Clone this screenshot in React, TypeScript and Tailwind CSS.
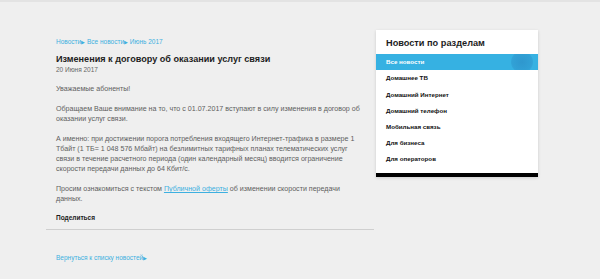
import React from "react";

const items = [
  "Все новости",
  "Домашнее ТВ",
  "Домашний Интернет",
  "Домашний телефон",
  "Мобильная связь",
  "Для бизнеса",
  "Для операторов",
];

export default function App() {
  return (
    <div
      className="w-[600px] h-[279px] bg-[#efefef] border-t-2 border-[#e3e3e3] overflow-hidden"
      style={{ fontFamily: '"Liberation Sans", Arial, sans-serif' }}
    >
      <div className="flex pl-[46px] pt-[28px]">
        <div className="w-[328px]">
          <div className="px-[10px]">
            <div className="mt-[8px] text-[6.5px] leading-[8px] text-[#3db0e0]">
              Новости<span className="text-[5px]">▶</span> Все новости<span className="text-[5px]">▶</span> Июнь 2017
            </div>
            <h1 className="mt-[7px] text-[9.1px] leading-[12px] font-bold text-[#1d1d1d]">
              Изменения к договору об оказании услуг связи
            </h1>
            <div className="mt-[0px] text-[6.5px] leading-[10px] text-[#666]">20 Июня 2017</div>
            <div className="mt-[9px] text-[7.1px] leading-[10px] text-[#5e5e5e]">
              <p className="mb-[10px]">Уважаемые абоненты!</p>
              <p className="mb-[10px]">
                Обращаем Ваше внимание на то, что с 01.07.2017 вступают в силу изменения в договор об
                оказании услуг связи.
              </p>
              <p className="mb-[10px]">
                А именно: при достижении порога потребления входящего Интернет-трафика в размере 1
                Тбайт (1 ТБ= 1 048 576 Мбайт) на безлимитных тарифных планах телематических услуг
                связи в течение расчетного периода (один календарный месяц) вводится ограничение
                скорости передачи данных до 64 Кбит/с.
              </p>
              <p>
                Просим ознакомиться с текстом{" "}
                <a className="text-[#3db0e0] underline">Публичной оферты</a> об изменении скорости
                передачи данных.
              </p>
            </div>
            <div className="mt-[9px] text-[6.5px] leading-[10px] font-bold text-[#1d1d1d]">
              Поделиться
            </div>
          </div>
          <div className="mt-[6px] border-t border-[#cfcfcf]"></div>
          <div className="px-[10px] mt-[23px] text-[6.5px] leading-[10px] text-[#3db0e0]">
            Вернуться к списку новостей<span className="text-[5px]">▶</span>
          </div>
        </div>
        <div className="ml-[2px] w-[162px] self-start bg-white shadow-[0_1px_3px_rgba(0,0,0,0.15)]">
          <div className="px-[10px] pt-[7px] pb-[5px] text-[9.2px] leading-[12px] font-bold text-[#1d1d1d]">
            Новости по разделам
          </div>
          <div className="pb-[6px]">
            {items.map((t, i) => (
              <div
                key={t}
                className={
                  i === 0
                    ? "relative h-[16px] flex items-center px-[10px] bg-[#36b1e2] text-white text-[6.2px] font-bold overflow-hidden"
                    : "h-[16.2px] flex items-center px-[10px] text-[#111] text-[6.2px] font-bold"
                }
              >
                {i === 0 && (
                  <span className="absolute right-[5px] top-[-3px] w-[22px] h-[22px] rounded-full bg-[radial-gradient(circle,rgba(40,130,190,0.55)_0%,rgba(40,130,190,0.35)_60%,rgba(40,130,190,0)_100%)]"></span>
                )}
                <span className="relative">{t}</span>
              </div>
            ))}
          </div>
          <div className="h-[4px] bg-black"></div>
        </div>
      </div>
    </div>
  );
}
